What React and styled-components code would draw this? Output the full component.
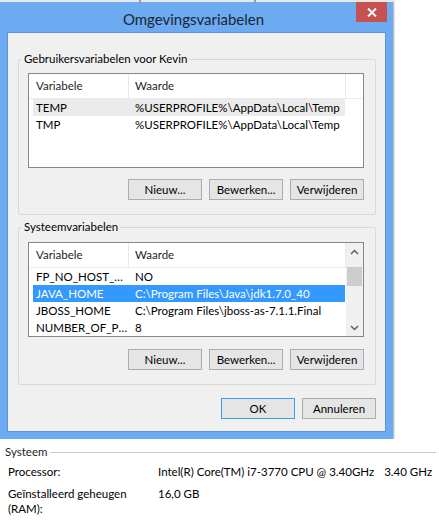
import styled, { createGlobalStyle } from 'styled-components';

const GlobalStyle = createGlobalStyle`
  html, body {
    margin: 0;
    padding: 0;
    background: #fff;
  }

  body {
    font-family: Lato, 'Noto Sans', sans-serif;
    font-size: 11.5px;
    color: #000;
  }
`;

const Page = styled.div`
  width: 439px;
  height: 522px;
  overflow: hidden;
  background: #fff;
`;

const TopStrip = styled.div`
  width: 395px;
  height: 2px;
  background: linear-gradient(
    to right,
    #e8e8e8 139px,
    #9c9c9c 139px,
    #9c9c9c 141px,
    #e8e8e8 141px,
    #e8e8e8 254px,
    #9c9c9c 254px,
    #9c9c9c 256px,
    #e8e8e8 256px
  );
`;

const Window = styled.div`
  width: 393px;
  box-sizing: border-box;
  padding: 0 7px 7px;
  background: #6caaf2;
  box-shadow: 1px 0 0 #b9c2cc, 2px 0 0 #e4e4e4;
`;

const TitleBar = styled.div`
  display: grid;
  grid-template-columns: 1fr auto 1fr;
  align-items: start;
  height: 30px;
  margin: 0 -1px 0 -7px;
`;

const Title = styled.div`
  grid-column: 2;
  padding-top: 7px;
  font-size: 15px;
  line-height: 20px;
  color: #1b2633;
`;

const CloseButton = styled.div`
  grid-column: 3;
  justify-self: end;
  display: flex;
  align-items: center;
  justify-content: center;
  width: 31px;
  height: 20px;
  background: #c75050;
`;

const Client = styled.div`
  border: 1px solid #5b93d6;
  background: #f0f0f0;
  padding: 19px 9px 12px 10px;
  display: flex;
  flex-direction: column;
`;

const Group = styled.fieldset`
  margin: ${({ $first }) => ($first ? '0' : '5px 0 0')};
  min-width: 0;
  border: 1px solid #d9d9d9;
  border-radius: 2px;
  padding: ${({ $padTop }) => $padTop}px 11px 14px 6px;
`;

const Legend = styled.legend`
  margin: 0 0 0 -3px;
  padding: 0 2px;
  line-height: 14px;
  color: #000;
`;

const ListView = styled.div`
  width: 336px;
  height: 95px;
  margin-left: 3px;
  box-sizing: border-box;
  border: 1px solid #828790;
  background: #fff;
  display: flex;
  overflow: hidden;
`;

const ListMain = styled.div`
  flex: 1;
  min-width: 0;
`;

const Header = styled.div`
  display: flex;
  height: 24px;
  border-bottom: 1px solid #e5ecf4;
`;

const HeaderCell = styled.div`
  width: ${({ $w }) => $w}px;
  box-sizing: border-box;
  padding-left: ${({ $pad }) => $pad}px;
  border-right: 1px solid #e3e9f1;
  line-height: 24px;
  color: #1e1e1e;
`;

const Rows = styled.div`
  padding-left: 4px;
`;

const Row = styled.div`
  display: flex;
  width: 312px;
  height: 17px;
  line-height: 17px;
  background: ${({ $state }) =>
    $state === 'selected' ? '#3399ff' : $state === 'hover' ? '#ebebeb' : 'transparent'};
  color: ${({ $state }) => ($state === 'selected' ? '#fff' : '#000')};
`;

const Cell = styled.div`
  width: ${({ $w }) => $w}px;
  box-sizing: border-box;
  padding-left: ${({ $pad }) => $pad}px;
  white-space: nowrap;
  overflow: hidden;
  text-overflow: ellipsis;
`;

const Scrollbar = styled.div`
  width: 17px;
  display: flex;
  flex-direction: column;
  background: #f0f0f0;
`;

const ScrollArrow = styled.div`
  height: 17px;
  display: flex;
  align-items: center;
  justify-content: center;
`;

const ScrollTrack = styled.div`
  flex: 1;
  padding: 7px 1px 0;
`;

const Thumb = styled.div`
  height: 19px;
  background: #cdcdcd;
`;

const ButtonRow = styled.div`
  display: flex;
  justify-content: flex-end;
  gap: 7px;
  margin-top: ${({ $top }) => $top}px;
`;

const Button = styled.div`
  width: 74px;
  height: 21px;
  box-sizing: border-box;
  border: 1px solid ${({ $default }) => ($default ? '#3c9bf0' : '#acacac')};
  background: #e5e5e5;
  display: flex;
  align-items: center;
  justify-content: center;
  color: #000;
`;

const SystemSection = styled.div`
  padding: 5px 3px 0 5px;
`;

const SectionHeading = styled.div`
  display: flex;
  align-items: center;
  gap: 3px;
  line-height: 15px;
  color: #1e1e1e;

  &::after {
    content: '';
    flex: 1;
    border-top: 1px solid #c8c8c8;
    margin-top: 1px;
  }
`;

const InfoGrid = styled.div`
  display: grid;
  grid-template-columns: 150px 1fr;
  row-gap: 7px;
  padding: 5px 0 0 3px;
  line-height: 15px;
`;

const InfoLabel = styled.div`
  padding-right: 10px;
`;

const InfoValue = styled.div`
  display: flex;
  gap: 10px;
  white-space: nowrap;
`;

const Chevron = ({ down }) => (
  <svg width="9" height="6" viewBox="0 0 9 6">
    <polyline
      points={down ? '1,1 4.5,4.5 8,1' : '1,5 4.5,1.5 8,5'}
      fill="none"
      stroke="#606060"
      strokeWidth="1.5"
    />
  </svg>
);

const userVars = [
  { name: 'TEMP', value: '%USERPROFILE%\\AppData\\Local\\Temp', state: 'hover' },
  { name: 'TMP', value: '%USERPROFILE%\\AppData\\Local\\Temp' },
];

const systemVars = [
  { name: 'FP_NO_HOST_CHECK', value: 'NO' },
  { name: 'JAVA_HOME', value: 'C:\\Program Files\\Java\\jdk1.7.0_40', state: 'selected' },
  { name: 'JBOSS_HOME', value: 'C:\\Program Files\\jboss-as-7.1.1.Final' },
  { name: 'NUMBER_OF_PROCESSORS', value: '8' },
];

const VarList = ({ vars, scroll }) => (
  <ListView>
    <ListMain>
      <Header>
        <HeaderCell $w={100} $pad={7}>Variabele</HeaderCell>
        <HeaderCell $w={217} $pad={6}>Waarde</HeaderCell>
      </Header>
      <Rows>
        {vars.map((v) => (
          <Row key={v.name} $state={v.state}>
            <Cell $w={95} $pad={3}>{v.name}</Cell>
            <Cell $w={217} $pad={7}>{v.value}</Cell>
          </Row>
        ))}
      </Rows>
    </ListMain>
    {scroll && (
      <Scrollbar>
        <ScrollArrow><Chevron /></ScrollArrow>
        <ScrollTrack><Thumb /></ScrollTrack>
        <ScrollArrow><Chevron down /></ScrollArrow>
      </Scrollbar>
    )}
  </ListView>
);

const EditButtons = ({ top }) => (
  <ButtonRow $top={top}>
    <Button>Nieuw...</Button>
    <Button>Bewerken...</Button>
    <Button>Verwijderen</Button>
  </ButtonRow>
);

export default function App() {
  return (
    <Page>
      <GlobalStyle />
      <TopStrip />
      <Window>
        <TitleBar>
          <Title>Omgevingsvariabelen</Title>
          <CloseButton>
            <svg width="10" height="9" viewBox="0 0 10 9">
              <path d="M1 0.5 L9 8.5 M9 0.5 L1 8.5" stroke="#fff" strokeWidth="2" />
            </svg>
          </CloseButton>
        </TitleBar>
        <Client>
          <Group $first $padTop={7}>
            <Legend>Gebruikersvariabelen voor Kevin</Legend>
            <VarList vars={userVars} />
            <EditButtons top={11} />
          </Group>
          <Group $padTop={8}>
            <Legend>Systeemvariabelen</Legend>
            <VarList vars={systemVars} scroll />
            <EditButtons top={12} />
          </Group>
          <ButtonRow $top={13}>
            <Button $default>OK</Button>
            <Button>Annuleren</Button>
          </ButtonRow>
        </Client>
      </Window>
      <SystemSection>
        <SectionHeading>Systeem</SectionHeading>
        <InfoGrid>
          <InfoLabel>Processor:</InfoLabel>
          <InfoValue>
            <span>Intel(R) Core(TM) i7-3770 CPU @ 3.40GHz</span>
            <span>3.40 GHz</span>
          </InfoValue>
          <InfoLabel>Geïnstalleerd geheugen (RAM):</InfoLabel>
          <InfoValue>16,0 GB</InfoValue>
        </InfoGrid>
      </SystemSection>
    </Page>
  );
}
